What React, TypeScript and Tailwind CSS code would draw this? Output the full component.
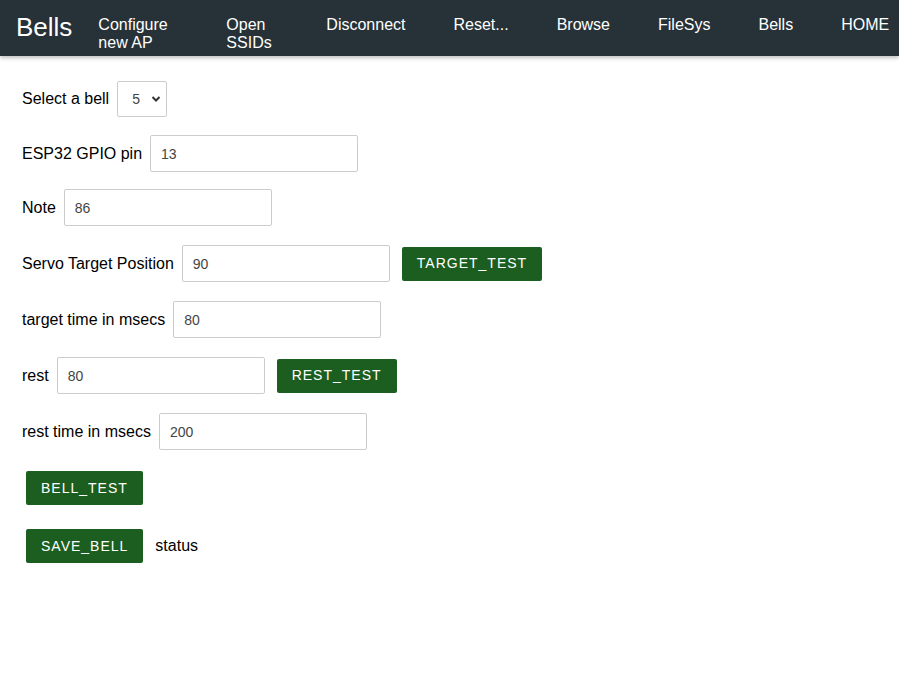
import { useState } from "react";

const navItems = [
  { label: "Configure new AP", w: "w-[80px]" },
  { label: "Open SSIDs", w: "w-[52px]" },
  { label: "Disconnect", w: "" },
  { label: "Reset...", w: "" },
  { label: "Browse", w: "" },
  { label: "FileSys", w: "" },
  { label: "Bells", w: "" },
  { label: "HOME", w: "" },
];

function Field({ label, value }: { label: string; value: string }) {
  const [v, setV] = useState(value);
  return (
    <div className="flex items-center gap-2">
      <span>{label}</span>
      <input
        value={v}
        onChange={(e) => setV(e.target.value)}
        className="h-[37px] w-[208px] rounded-[2px] border border-[#cccccc] bg-white px-[10px] text-[14px] text-[#444] outline-none"
      />
    </div>
  );
}

function GreenButton({ children }: { children: string }) {
  return (
    <button className="h-[34px] rounded-[2px] bg-[#1b5e20] px-[15px] text-[14px] tracking-[1px] text-white">
      {children}
    </button>
  );
}

export default function App() {
  const [bell, setBell] = useState("5");

  return (
    <div className="min-h-[692px] bg-white font-['Liberation_Sans',Arial,sans-serif] text-[16px] text-black">
      <nav className="flex h-[56px] items-start bg-[#263238] pl-4 text-white shadow-[0_2px_4px_rgba(0,0,0,0.25)]">
        <span className="mr-[26px] mt-[10px] text-[26px] leading-[34px]">Bells</span>
        <ul className="mt-[16px] flex gap-[48px] leading-[18px]">
          {navItems.map((item) => (
            <li key={item.label} className={"shrink-0 " + item.w}>
              <a href="#">{item.label}</a>
            </li>
          ))}
        </ul>
      </nav>

      <main className="flex flex-col px-[22px] pt-[25px]">
        <div className="flex items-center gap-2">
          <span>Select a bell</span>
          <div className="relative">
            <select
              value={bell}
              onChange={(e) => setBell(e.target.value)}
              className="h-[36px] w-[50px] appearance-none rounded-[2px] border border-[#cccccc] bg-white pl-[14px] text-[14px] text-[#444] outline-none"
            >
              {["1", "2", "3", "4", "5", "6", "7", "8"].map((n) => (
                <option key={n}>{n}</option>
              ))}
            </select>
            <svg
              className="pointer-events-none absolute right-[6px] top-[14px]"
              width="10"
              height="8"
              viewBox="0 0 10 8"
            >
              <path d="M1.5 2 L5 5.5 L8.5 2" fill="none" stroke="#333" strokeWidth="2" />
            </svg>
          </div>
        </div>

        <div className="mt-[18px]">
          <Field label="ESP32 GPIO pin" value="13" />
        </div>
        <div className="mt-[17px]">
          <Field label="Note" value="86" />
        </div>

        <div className="mt-[19px] flex items-center gap-3">
          <Field label="Servo Target Position" value="90" />
          <GreenButton>TARGET_TEST</GreenButton>
        </div>

        <div className="mt-[19px]">
          <Field label="target time in msecs" value="80" />
        </div>

        <div className="mt-[19px] flex items-center gap-3">
          <Field label="rest" value="80" />
          <GreenButton>REST_TEST</GreenButton>
        </div>

        <div className="mt-[19px]">
          <Field label="rest time in msecs" value="200" />
        </div>

        <div className="mt-[21px] flex items-center pl-1">
          <GreenButton>BELL_TEST</GreenButton>
        </div>

        <div className="mt-[24px] flex items-center gap-3 pl-1">
          <GreenButton>SAVE_BELL</GreenButton>
          <span>status</span>
        </div>
      </main>
    </div>
  );
}
